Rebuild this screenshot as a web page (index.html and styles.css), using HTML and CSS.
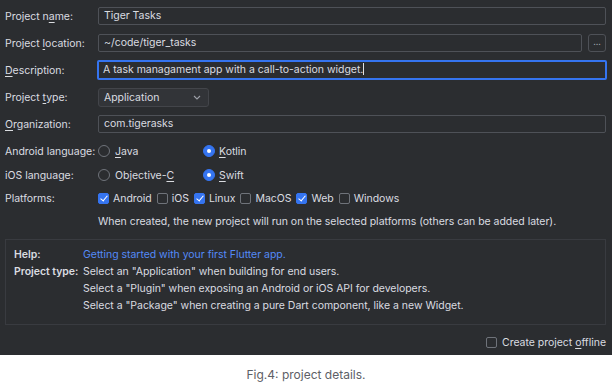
FILE: index.html
```html
<!DOCTYPE html>
<html lang="en">
<head>
  <meta charset="UTF-8">
  <meta name="viewport" content="width=device-width, initial-scale=1.0">
  <title>New Flutter Project</title>
  <link rel="stylesheet" href="styles.css">
</head>
<body>
  <div class="dialog">
    <!-- text fields -->
    <div class="row">
      <label>Project n<u>a</u>me:</label>
      <div class="input">Tiger Tasks</div>
    </div>
    <div class="row">
      <label>Project <u>l</u>ocation:</label>
      <div class="with-btn">
        <div class="input">~/code/tiger_tasks</div>
        <div class="browse">...</div>
      </div>
    </div>
    <div class="row">
      <label><u>D</u>escription:</label>
      <div class="input focused">A task managament app with a call-to-action widget.<span class="caret"></span></div>
    </div>
    <div class="row">
      <label>Project <u>t</u>ype:</label>
      <div class="select"><span>Application</span>
        <svg width="8" height="5" viewBox="0 0 8 5"><path d="M1 1l3 3 3-3" fill="none" stroke="#9da0a8" stroke-width="1.1"/></svg>
      </div>
    </div>
    <div class="row">
      <label><u>O</u>rganization:</label>
      <div class="input">com.tigerasks</div>
    </div>

    <!-- options -->
    <div class="opt-row first">
      <label>Android language:</label>
      <div class="choices">
        <span class="choice lang"><span class="radio"></span><span><u>J</u>ava</span></span>
        <span class="choice"><span class="radio on"></span><span><u>K</u>otlin</span></span>
      </div>
    </div>
    <div class="opt-row second">
      <label>iOS language:</label>
      <div class="choices">
        <span class="choice lang"><span class="radio"></span><span>Objective-<u>C</u></span></span>
        <span class="choice"><span class="radio on"></span><span><u>S</u>wift</span></span>
      </div>
    </div>
    <div class="opt-row">
      <label>Platforms:</label>
      <div class="choices tight">
        <span class="choice"><span class="check on"></span><span>Android</span></span>
        <span class="choice"><span class="check"></span><span>iOS</span></span>
        <span class="choice"><span class="check on"></span><span>Linux</span></span>
        <span class="choice"><span class="check"></span><span>MacOS</span></span>
        <span class="choice"><span class="check on"></span><span>Web</span></span>
        <span class="choice"><span class="check"></span><span>Windows</span></span>
      </div>
    </div>
    <div class="opt-row note">
      <span></span>
      <p>When created, the new project will run on the selected platforms (others can be added later).</p>
    </div>

    <!-- help -->
    <div class="help">
      <b>Help:</b>
      <a href="#">Getting started with your first Flutter app.</a>
      <b>Project type:</b>
      <span>Select an "Application" when building for end users.</span>
      <span></span>
      <span>Select a "Plugin" when exposing an Android or iOS API for developers.</span>
      <span></span>
      <span>Select a "Package" when creating a pure Dart component, like a new Widget.</span>
    </div>

    <div class="offline">
      <span class="check"></span><span>Create project <u>o</u>ffline</span>
    </div>
  </div>
  <p class="caption">Fig.4: project details.</p>
</body>
</html>
```

FILE: styles.css
```css
body { margin: 0; background: #fff; font-family: Inter, "Noto Sans", sans-serif; }
.dialog { background: #2b2d30; height: 355px; box-sizing: border-box; padding: 7px 6px 0 5px; color: #dadce0; font-size: 10.5px; letter-spacing: -0.03px; }
label, .help b, .choice { white-space: nowrap; }
u { text-decoration-thickness: 1px; text-underline-offset: 2px; }

.row { display: grid; grid-template-columns: 93px 1fr; align-items: center; height: 18px; margin-bottom: 9px; }
.input { height: 18px; box-sizing: border-box; border: 1px solid #4e5157; border-radius: 2px; padding: 0 5px; line-height: 16px; white-space: nowrap; }
.input.focused { border: 2px solid #3574f0; margin: -1px; height: 20px; padding: 0 4px; line-height: 16px; }
.caret { display: inline-block; width: 1px; height: 12px; background: #dfe1e5; vertical-align: -2px; }
.with-btn { display: flex; gap: 6px; }
.with-btn .input { flex: 1; }
.browse { width: 18px; height: 18px; box-sizing: border-box; border: 1px solid #4e5157; border-radius: 3px; font-size: 9px; line-height: 14px; text-align: center; color: #9da0a8; }
.select { width: 111px; height: 19px; box-sizing: border-box; border: 1px solid #43454a; border-radius: 3px; background: #323438; padding: 0 7px 0 5px; display: flex; align-items: center; justify-content: space-between; }

.opt-row { display: grid; grid-template-columns: 93px 1fr; align-items: center; height: 18px; margin-top: 5px; }
.opt-row.first { margin-top: 2px; }
.opt-row.second { margin-top: 6px; }
.opt-row.note p { margin: 0; }
.choices { display: flex; align-items: center; }
.choice { display: flex; align-items: center; gap: 4px; margin-right: 5px; }
.choice.lang { width: 100px; margin-right: 5px; gap: 5px; }

.radio { width: 12px; height: 12px; box-sizing: border-box; border: 1px solid #6f737a; border-radius: 50%; }
.radio.on { background: #3574f0; border-color: #3574f0; position: relative; }
.radio.on::after { content: ""; position: absolute; left: 3px; top: 3px; width: 4px; height: 4px; border-radius: 50%; background: #fff; }
.check { width: 11px; height: 11px; box-sizing: border-box; border: 1px solid #6f737a; border-radius: 2px; position: relative; }
.check.on { background: #3574f0; border-color: #3574f0; }
.check.on::after { content: ""; position: absolute; left: 3px; top: 0; width: 3px; height: 6px; border: solid #fff; border-width: 0 1.5px 1.5px 0; transform: rotate(40deg); }

.help { margin-top: 9px; border: 1px solid #393b40; background: #2b2d30; padding: 6px 8px 10px; display: grid; grid-template-columns: 69px 1fr; line-height: 17px; }
.help b { font-weight: 600; }
.help a { color: #548af7; text-decoration: none; }

.offline { display: flex; justify-content: flex-end; align-items: center; gap: 5px; margin-top: 11px; }
.caption { margin: 12px 0 0; text-align: center; color: #5d6066; font-size: 12px; }
```
